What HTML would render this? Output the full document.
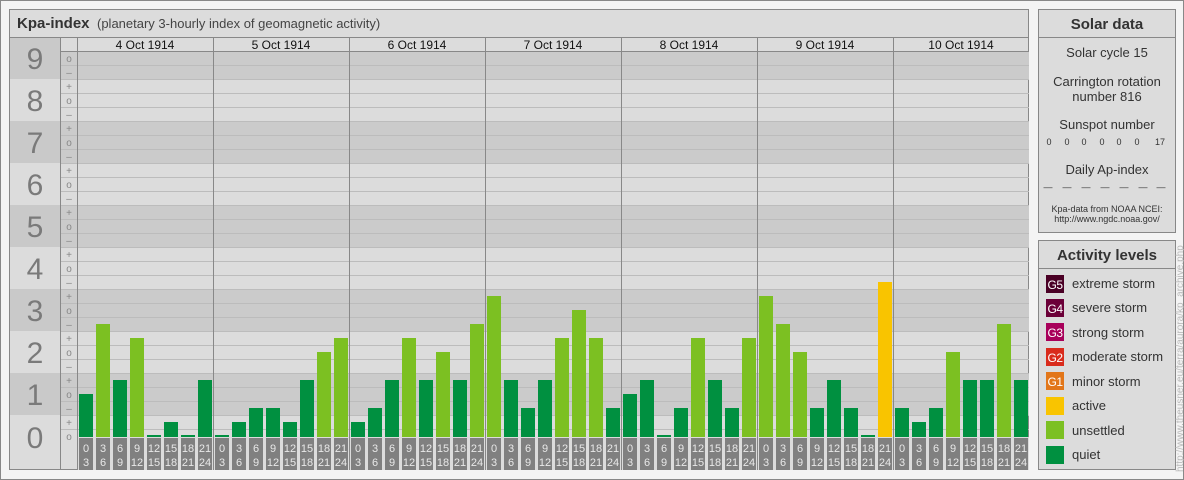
<!DOCTYPE html>
<html><head><meta charset="utf-8"><style>
html,body{margin:0;padding:0;background:#f4f4f4;}
svg{display:block;font-family:"Liberation Sans",Arial,sans-serif;}
</style></head><body>
<svg width="1184" height="480" viewBox="0 0 1184 480" xmlns="http://www.w3.org/2000/svg">
<rect x="0.5" y="0.5" width="1183" height="479" fill="#f4f4f4" stroke="#888"/>
<rect x="9.5" y="9.5" width="1019" height="460" fill="#dcdcdc" stroke="#888"/>
<line x1="9" y1="37.5" x2="1029" y2="37.5" stroke="#888"/>
<text x="17" y="28" font-size="15" font-weight="bold" fill="#333">Kpa-index</text>
<text x="97" y="28" font-size="13" fill="#444">(planetary 3-hourly index of geomagnetic activity)</text>
<g fill="#c9c9c9">
<rect x="10" y="38" width="50" height="41"/>
<rect x="10" y="121" width="50" height="42"/>
<rect x="10" y="205" width="50" height="42"/>
<rect x="10" y="289" width="50" height="42"/>
<rect x="10" y="373" width="50" height="42"/>
</g>
<g fill="#cbcbcb">
<rect x="60" y="51" width="969" height="28"/>
<rect x="60" y="121" width="969" height="42"/>
<rect x="60" y="205" width="969" height="42"/>
<rect x="60" y="289" width="969" height="42"/>
<rect x="60" y="373" width="969" height="42"/>
</g>
<g font-size="30" fill="#7a7a7a" text-anchor="middle">
<text x="35" y="69">9</text><text x="35" y="111">8</text><text x="35" y="153">7</text><text x="35" y="195">6</text><text x="35" y="237">5</text><text x="35" y="279">4</text><text x="35" y="321">3</text><text x="35" y="363">2</text><text x="35" y="405">1</text><text x="35" y="448">0</text>
</g>
<g stroke="#bcbcbc" stroke-width="1">
<line x1="60" y1="65.5" x2="1029" y2="65.5"/><line x1="60" y1="79.5" x2="1029" y2="79.5"/><line x1="60" y1="93.5" x2="1029" y2="93.5"/><line x1="60" y1="107.5" x2="1029" y2="107.5"/><line x1="60" y1="121.5" x2="1029" y2="121.5"/><line x1="60" y1="135.5" x2="1029" y2="135.5"/><line x1="60" y1="149.5" x2="1029" y2="149.5"/><line x1="60" y1="163.5" x2="1029" y2="163.5"/><line x1="60" y1="177.5" x2="1029" y2="177.5"/><line x1="60" y1="191.5" x2="1029" y2="191.5"/><line x1="60" y1="205.5" x2="1029" y2="205.5"/><line x1="60" y1="219.5" x2="1029" y2="219.5"/><line x1="60" y1="233.5" x2="1029" y2="233.5"/><line x1="60" y1="247.5" x2="1029" y2="247.5"/><line x1="60" y1="261.5" x2="1029" y2="261.5"/><line x1="60" y1="275.5" x2="1029" y2="275.5"/><line x1="60" y1="289.5" x2="1029" y2="289.5"/><line x1="60" y1="303.5" x2="1029" y2="303.5"/><line x1="60" y1="317.5" x2="1029" y2="317.5"/><line x1="60" y1="331.5" x2="1029" y2="331.5"/><line x1="60" y1="345.5" x2="1029" y2="345.5"/><line x1="60" y1="359.5" x2="1029" y2="359.5"/><line x1="60" y1="373.5" x2="1029" y2="373.5"/><line x1="60" y1="387.5" x2="1029" y2="387.5"/><line x1="60" y1="401.5" x2="1029" y2="401.5"/><line x1="60" y1="415.5" x2="1029" y2="415.5"/><line x1="60" y1="429.5" x2="1029" y2="429.5"/>
</g>
<line x1="60" y1="51.5" x2="1029" y2="51.5" stroke="#888"/>
<g font-size="10" fill="#888" text-anchor="middle">
<text x="69" y="440">o</text><text x="69" y="426">+</text><text x="69" y="412">–</text>
<text x="69" y="398">o</text><text x="69" y="384">+</text><text x="69" y="370">–</text>
<text x="69" y="356">o</text><text x="69" y="342">+</text><text x="69" y="328">–</text>
<text x="69" y="314">o</text><text x="69" y="300">+</text><text x="69" y="286">–</text>
<text x="69" y="272">o</text><text x="69" y="258">+</text><text x="69" y="244">–</text>
<text x="69" y="230">o</text><text x="69" y="216">+</text><text x="69" y="202">–</text>
<text x="69" y="188">o</text><text x="69" y="174">+</text><text x="69" y="160">–</text>
<text x="69" y="146">o</text><text x="69" y="132">+</text><text x="69" y="118">–</text>
<text x="69" y="104">o</text><text x="69" y="90">+</text><text x="69" y="76">–</text>
<text x="69" y="62">o</text>
</g>
<rect x="77" y="437" width="952" height="33" fill="#dcdcdc"/>
<g stroke="#888">
<line x1="60.5" y1="37" x2="60.5" y2="470"/><line x1="77.5" y1="37" x2="77.5" y2="470"/>
<line x1="213.5" y1="37" x2="213.5" y2="470"/><line x1="349.5" y1="37" x2="349.5" y2="470"/><line x1="485.5" y1="37" x2="485.5" y2="470"/><line x1="621.5" y1="37" x2="621.5" y2="470"/><line x1="757.5" y1="37" x2="757.5" y2="470"/><line x1="893.5" y1="37" x2="893.5" y2="470"/>
</g>
<g font-size="12" fill="#111" text-anchor="middle">
<text x="145" y="49">4 Oct 1914</text><text x="281" y="49">5 Oct 1914</text><text x="417" y="49">6 Oct 1914</text><text x="553" y="49">7 Oct 1914</text><text x="689" y="49">8 Oct 1914</text><text x="825" y="49">9 Oct 1914</text><text x="961" y="49">10 Oct 1914</text>
</g>
<g>
<rect x="79" y="394" width="14" height="43" fill="#009040"/><rect x="96" y="324" width="14" height="113" fill="#7cc022"/><rect x="113" y="380" width="14" height="57" fill="#009040"/><rect x="130" y="338" width="14" height="99" fill="#7cc022"/><rect x="147" y="435" width="14" height="2" fill="#009040"/><rect x="164" y="422" width="14" height="15" fill="#009040"/><rect x="181" y="435" width="14" height="2" fill="#009040"/><rect x="198" y="380" width="14" height="57" fill="#009040"/>
<rect x="215" y="435" width="14" height="2" fill="#009040"/><rect x="232" y="422" width="14" height="15" fill="#009040"/><rect x="249" y="408" width="14" height="29" fill="#009040"/><rect x="266" y="408" width="14" height="29" fill="#009040"/><rect x="283" y="422" width="14" height="15" fill="#009040"/><rect x="300" y="380" width="14" height="57" fill="#009040"/><rect x="317" y="352" width="14" height="85" fill="#7cc022"/><rect x="334" y="338" width="14" height="99" fill="#7cc022"/>
<rect x="351" y="422" width="14" height="15" fill="#009040"/><rect x="368" y="408" width="14" height="29" fill="#009040"/><rect x="385" y="380" width="14" height="57" fill="#009040"/><rect x="402" y="338" width="14" height="99" fill="#7cc022"/><rect x="419" y="380" width="14" height="57" fill="#009040"/><rect x="436" y="352" width="14" height="85" fill="#7cc022"/><rect x="453" y="380" width="14" height="57" fill="#009040"/><rect x="470" y="324" width="14" height="113" fill="#7cc022"/>
<rect x="487" y="296" width="14" height="141" fill="#7cc022"/><rect x="504" y="380" width="14" height="57" fill="#009040"/><rect x="521" y="408" width="14" height="29" fill="#009040"/><rect x="538" y="380" width="14" height="57" fill="#009040"/><rect x="555" y="338" width="14" height="99" fill="#7cc022"/><rect x="572" y="310" width="14" height="127" fill="#7cc022"/><rect x="589" y="338" width="14" height="99" fill="#7cc022"/><rect x="606" y="408" width="14" height="29" fill="#009040"/>
<rect x="623" y="394" width="14" height="43" fill="#009040"/><rect x="640" y="380" width="14" height="57" fill="#009040"/><rect x="657" y="435" width="14" height="2" fill="#009040"/><rect x="674" y="408" width="14" height="29" fill="#009040"/><rect x="691" y="338" width="14" height="99" fill="#7cc022"/><rect x="708" y="380" width="14" height="57" fill="#009040"/><rect x="725" y="408" width="14" height="29" fill="#009040"/><rect x="742" y="338" width="14" height="99" fill="#7cc022"/>
<rect x="759" y="296" width="14" height="141" fill="#7cc022"/><rect x="776" y="324" width="14" height="113" fill="#7cc022"/><rect x="793" y="352" width="14" height="85" fill="#7cc022"/><rect x="810" y="408" width="14" height="29" fill="#009040"/><rect x="827" y="380" width="14" height="57" fill="#009040"/><rect x="844" y="408" width="14" height="29" fill="#009040"/><rect x="861" y="435" width="14" height="2" fill="#009040"/><rect x="878" y="282" width="14" height="155" fill="#f9c400"/>
<rect x="895" y="408" width="14" height="29" fill="#009040"/><rect x="912" y="422" width="14" height="15" fill="#009040"/><rect x="929" y="408" width="14" height="29" fill="#009040"/><rect x="946" y="352" width="14" height="85" fill="#7cc022"/><rect x="963" y="380" width="14" height="57" fill="#009040"/><rect x="980" y="380" width="14" height="57" fill="#009040"/><rect x="997" y="324" width="14" height="113" fill="#7cc022"/><rect x="1014" y="380" width="14" height="57" fill="#009040"/>
</g>
<g fill="#808080">
<rect x="79" y="438" width="14" height="32"/><rect x="96" y="438" width="14" height="32"/><rect x="113" y="438" width="14" height="32"/><rect x="130" y="438" width="14" height="32"/><rect x="147" y="438" width="14" height="32"/><rect x="164" y="438" width="14" height="32"/><rect x="181" y="438" width="14" height="32"/><rect x="198" y="438" width="14" height="32"/>
<rect x="215" y="438" width="14" height="32"/><rect x="232" y="438" width="14" height="32"/><rect x="249" y="438" width="14" height="32"/><rect x="266" y="438" width="14" height="32"/><rect x="283" y="438" width="14" height="32"/><rect x="300" y="438" width="14" height="32"/><rect x="317" y="438" width="14" height="32"/><rect x="334" y="438" width="14" height="32"/>
<rect x="351" y="438" width="14" height="32"/><rect x="368" y="438" width="14" height="32"/><rect x="385" y="438" width="14" height="32"/><rect x="402" y="438" width="14" height="32"/><rect x="419" y="438" width="14" height="32"/><rect x="436" y="438" width="14" height="32"/><rect x="453" y="438" width="14" height="32"/><rect x="470" y="438" width="14" height="32"/>
<rect x="487" y="438" width="14" height="32"/><rect x="504" y="438" width="14" height="32"/><rect x="521" y="438" width="14" height="32"/><rect x="538" y="438" width="14" height="32"/><rect x="555" y="438" width="14" height="32"/><rect x="572" y="438" width="14" height="32"/><rect x="589" y="438" width="14" height="32"/><rect x="606" y="438" width="14" height="32"/>
<rect x="623" y="438" width="14" height="32"/><rect x="640" y="438" width="14" height="32"/><rect x="657" y="438" width="14" height="32"/><rect x="674" y="438" width="14" height="32"/><rect x="691" y="438" width="14" height="32"/><rect x="708" y="438" width="14" height="32"/><rect x="725" y="438" width="14" height="32"/><rect x="742" y="438" width="14" height="32"/>
<rect x="759" y="438" width="14" height="32"/><rect x="776" y="438" width="14" height="32"/><rect x="793" y="438" width="14" height="32"/><rect x="810" y="438" width="14" height="32"/><rect x="827" y="438" width="14" height="32"/><rect x="844" y="438" width="14" height="32"/><rect x="861" y="438" width="14" height="32"/><rect x="878" y="438" width="14" height="32"/>
<rect x="895" y="438" width="14" height="32"/><rect x="912" y="438" width="14" height="32"/><rect x="929" y="438" width="14" height="32"/><rect x="946" y="438" width="14" height="32"/><rect x="963" y="438" width="14" height="32"/><rect x="980" y="438" width="14" height="32"/><rect x="997" y="438" width="14" height="32"/><rect x="1014" y="438" width="14" height="32"/>
</g>
<g font-size="11" fill="#e8e8e8" text-anchor="middle">
<text x="86" y="452">0</text><text x="86" y="466">3</text><text x="103" y="452">3</text><text x="103" y="466">6</text><text x="120" y="452">6</text><text x="120" y="466">9</text><text x="137" y="452">9</text><text x="137" y="466">12</text><text x="154" y="452">12</text><text x="154" y="466">15</text><text x="171" y="452">15</text><text x="171" y="466">18</text><text x="188" y="452">18</text><text x="188" y="466">21</text><text x="205" y="452">21</text><text x="205" y="466">24</text>
<text x="222" y="452">0</text><text x="222" y="466">3</text><text x="239" y="452">3</text><text x="239" y="466">6</text><text x="256" y="452">6</text><text x="256" y="466">9</text><text x="273" y="452">9</text><text x="273" y="466">12</text><text x="290" y="452">12</text><text x="290" y="466">15</text><text x="307" y="452">15</text><text x="307" y="466">18</text><text x="324" y="452">18</text><text x="324" y="466">21</text><text x="341" y="452">21</text><text x="341" y="466">24</text>
<text x="358" y="452">0</text><text x="358" y="466">3</text><text x="375" y="452">3</text><text x="375" y="466">6</text><text x="392" y="452">6</text><text x="392" y="466">9</text><text x="409" y="452">9</text><text x="409" y="466">12</text><text x="426" y="452">12</text><text x="426" y="466">15</text><text x="443" y="452">15</text><text x="443" y="466">18</text><text x="460" y="452">18</text><text x="460" y="466">21</text><text x="477" y="452">21</text><text x="477" y="466">24</text>
<text x="494" y="452">0</text><text x="494" y="466">3</text><text x="511" y="452">3</text><text x="511" y="466">6</text><text x="528" y="452">6</text><text x="528" y="466">9</text><text x="545" y="452">9</text><text x="545" y="466">12</text><text x="562" y="452">12</text><text x="562" y="466">15</text><text x="579" y="452">15</text><text x="579" y="466">18</text><text x="596" y="452">18</text><text x="596" y="466">21</text><text x="613" y="452">21</text><text x="613" y="466">24</text>
<text x="630" y="452">0</text><text x="630" y="466">3</text><text x="647" y="452">3</text><text x="647" y="466">6</text><text x="664" y="452">6</text><text x="664" y="466">9</text><text x="681" y="452">9</text><text x="681" y="466">12</text><text x="698" y="452">12</text><text x="698" y="466">15</text><text x="715" y="452">15</text><text x="715" y="466">18</text><text x="732" y="452">18</text><text x="732" y="466">21</text><text x="749" y="452">21</text><text x="749" y="466">24</text>
<text x="766" y="452">0</text><text x="766" y="466">3</text><text x="783" y="452">3</text><text x="783" y="466">6</text><text x="800" y="452">6</text><text x="800" y="466">9</text><text x="817" y="452">9</text><text x="817" y="466">12</text><text x="834" y="452">12</text><text x="834" y="466">15</text><text x="851" y="452">15</text><text x="851" y="466">18</text><text x="868" y="452">18</text><text x="868" y="466">21</text><text x="885" y="452">21</text><text x="885" y="466">24</text>
<text x="902" y="452">0</text><text x="902" y="466">3</text><text x="919" y="452">3</text><text x="919" y="466">6</text><text x="936" y="452">6</text><text x="936" y="466">9</text><text x="953" y="452">9</text><text x="953" y="466">12</text><text x="970" y="452">12</text><text x="970" y="466">15</text><text x="987" y="452">15</text><text x="987" y="466">18</text><text x="1004" y="452">18</text><text x="1004" y="466">21</text><text x="1021" y="452">21</text><text x="1021" y="466">24</text>
</g>
<rect x="1038.5" y="9.5" width="137" height="223" fill="#dcdcdc" stroke="#888"/>
<line x1="1038" y1="37.5" x2="1176" y2="37.5" stroke="#888"/>
<g text-anchor="middle" fill="#333">
<text x="1107" y="29" font-size="15" font-weight="bold">Solar data</text>
<text x="1107" y="57" font-size="13">Solar cycle 15</text>
<text x="1107" y="86" font-size="13">Carrington rotation</text>
<text x="1107" y="101" font-size="13">number 816</text>
<text x="1107" y="129" font-size="13">Sunspot number</text>
<g font-size="9"><text x="1049" y="145">0</text><text x="1067" y="145">0</text><text x="1084" y="145">0</text><text x="1102" y="145">0</text><text x="1119" y="145">0</text><text x="1137" y="145">0</text><text x="1160" y="145">17</text></g>
<text x="1107" y="174" font-size="13">Daily Ap-index</text>
<g font-size="9"><text x="1048" y="190">—</text><text x="1067" y="190">—</text><text x="1086" y="190">—</text><text x="1105" y="190">—</text><text x="1124" y="190">—</text><text x="1143" y="190">—</text><text x="1161" y="190">—</text></g>
<text x="1107" y="212" font-size="9">Kpa-data from NOAA NCEI:</text>
<text x="1107" y="222" font-size="9">http://www.ngdc.noaa.gov/</text>
</g>
<rect x="1038.5" y="240.5" width="137" height="229" fill="#dcdcdc" stroke="#888"/>
<line x1="1038" y1="268.5" x2="1176" y2="268.5" stroke="#888"/>
<text x="1107" y="260" font-size="15" font-weight="bold" fill="#333" text-anchor="middle">Activity levels</text>
<rect x="1046" y="275" width="18" height="18" fill="#4a0025"/>
<rect x="1046" y="299" width="18" height="18" fill="#6b0038"/>
<rect x="1046" y="323" width="18" height="18" fill="#a8005a"/>
<rect x="1046" y="348" width="18" height="18" fill="#d92b1c"/>
<rect x="1046" y="372" width="18" height="18" fill="#e27619"/>
<rect x="1046" y="397" width="18" height="18" fill="#f9c400"/>
<rect x="1046" y="421" width="18" height="18" fill="#7cc022"/>
<rect x="1046" y="446" width="18" height="18" fill="#009040"/>
<g font-size="12" fill="#fff" text-anchor="middle" letter-spacing="-0.5">
<text x="1055" y="289">G5</text><text x="1055" y="313">G4</text><text x="1055" y="337">G3</text><text x="1055" y="362">G2</text><text x="1055" y="386">G1</text>
</g>
<g font-size="13" fill="#333">
<text x="1072" y="288">extreme storm</text><text x="1072" y="312">severe storm</text><text x="1072" y="337">strong storm</text><text x="1072" y="361">moderate storm</text><text x="1072" y="386">minor storm</text><text x="1072" y="410">active</text><text x="1072" y="435">unsettled</text><text x="1072" y="459">quiet</text>
</g>
<text transform="translate(1183,472) rotate(-90)" font-size="10" fill="#bbb">http://www.theusner.eu/terra/aurora/kp_archive.php</text>
</svg>
</body></html>
